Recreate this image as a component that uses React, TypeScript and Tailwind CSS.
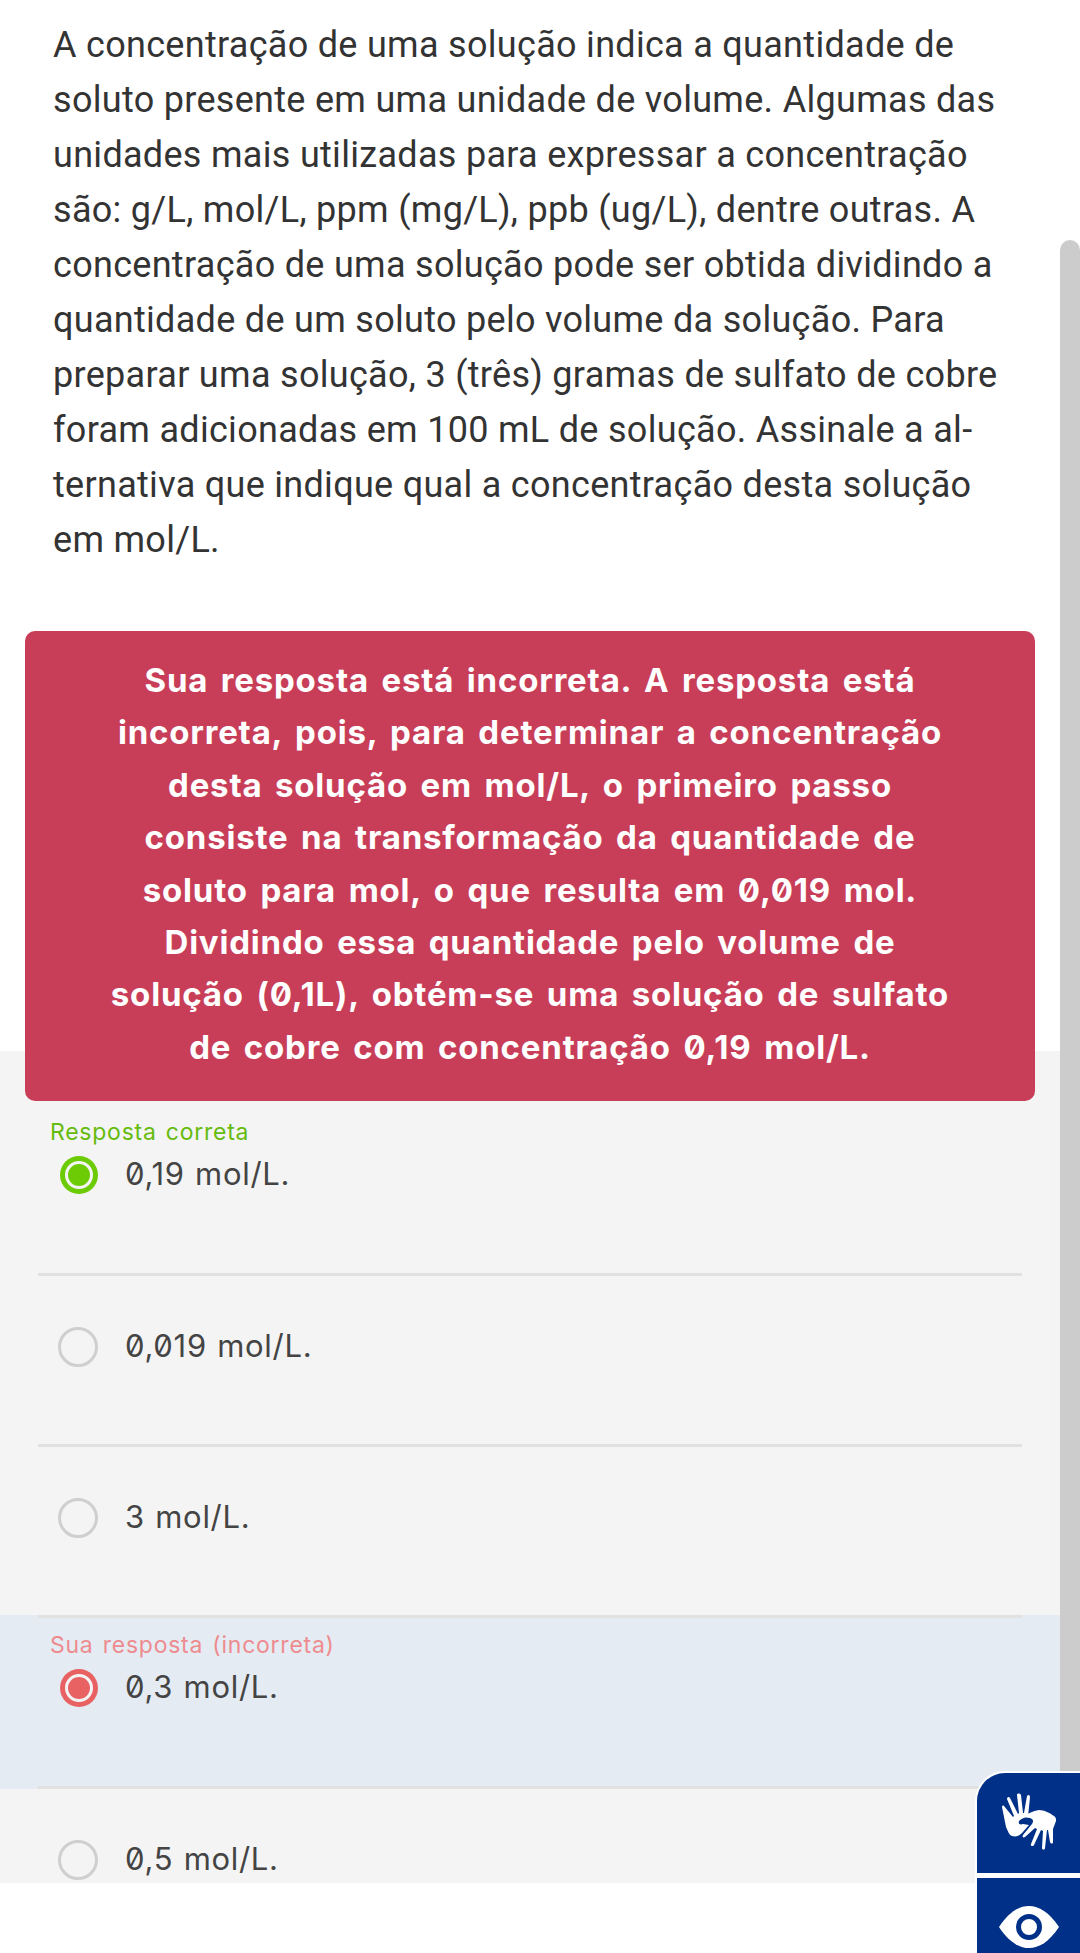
const questionLines = [
  'A concentração de uma solução indica a quantidade de',
  'soluto presente em uma unidade de volume. Algumas das',
  'unidades mais utilizadas para expressar a concentração',
  'são: g/L, mol/L, ppm (mg/L), ppb (ug/L), dentre outras. A',
  'concentração de uma solução pode ser obtida dividindo a',
  'quantidade de um soluto pelo volume da solução. Para',
  'preparar uma solução, 3 (três) gramas de sulfato de cobre',
  'foram adicionadas em 100 mL de solução. Assinale a al-',
  'ternativa que indique qual a concentração desta solução',
  'em mol/L.',
]

const feedbackLines = [
  'Sua resposta está incorreta. A resposta está',
  'incorreta, pois, para determinar a concentração',
  'desta solução em mol/L, o primeiro passo',
  'consiste na transformação da quantidade de',
  'soluto para mol, o que resulta em 0,019 mol.',
  'Dividindo essa quantidade pelo volume de',
  'solução (0,1L), obtém-se uma solução de sulfato',
  'de cobre com concentração 0,19 mol/L.',
]

type OptionState = 'correct' | 'wrong' | 'none'

const options: { text: string; state: OptionState; label?: string }[] = [
  { text: '0,19 mol/L.', state: 'correct', label: 'Resposta correta' },
  { text: '0,019 mol/L.', state: 'none' },
  { text: '3 mol/L.', state: 'none' },
  { text: '0,3 mol/L.', state: 'wrong', label: 'Sua resposta (incorreta)' },
  { text: '0,5 mol/L.', state: 'none' },
]

function Radio({ state }: { state: OptionState }) {
  if (state === 'none') {
    return <div className="h-[40px] w-[40px] shrink-0 rounded-full border-[3px] border-[#cfcfcf]" />
  }
  return (
    <div
      className={`ml-[2px] flex h-[38px] w-[38px] shrink-0 items-center justify-center rounded-full ${
        state === 'correct' ? 'bg-[#6ccb05]' : 'bg-[#e96263]'
      }`}
    >
      <div className="h-[28px] w-[28px] rounded-full border-[3px] border-[#f4f4f4]" />
    </div>
  )
}

function OptionRow({ text, state, label }: { text: string; state: OptionState; label?: string }) {
  const isWrong = state === 'wrong'
  return (
    <div className={isWrong ? '-mt-[3px] h-[174px] bg-[#e4ebf3]' : 'h-[171px]'}>
      <div className={`mx-[38px] h-full border-b-[3px] border-[#e1e1e1] pt-[11px] ${isWrong ? 'border-t-[3px]' : ''}`}>
        {label ? (
          <div
            className={`h-[30px] pl-[12px] pt-[1px] text-[23px] leading-[30px] tracking-[0.75px] [word-spacing:2px] ${
              state === 'correct' ? 'text-[#66bb0e]' : 'text-[#ee8b8f]'
            }`}
          >
            {label}
          </div>
        ) : (
          <div className="h-[30px]" />
        )}
        <div className="mt-[10px] flex items-center pl-[20px]">
          <Radio state={state} />
          <span className="ml-[27px] -translate-y-[1px] text-[31px] leading-[38px] tracking-[0.7px] text-[#444444] [font-feature-settings:'zero'] [word-spacing:1px]">
            {text}
          </span>
        </div>
      </div>
    </div>
  )
}

function SignLanguageIcon() {
  return (
    <svg viewBox="0 0 54 60" className="h-[60px] w-[54px]" fill="white">
      <path d="M0 14c0-1 1-2 2-1l9 11 1-1-7-17c0-2 2-3 3-1l8 16 1-1-2-18c0-2 3-2 4 0l2 18h1l3-17c1-2 3-1 3 1l-2 20c-3 0-7 2-9 4-1 3 1 4 4 3l6 1-7 8c-3 3-6 4-10 3-3-1-4-5-6-9z" />
      <path d="M20 24c5-3 11-6 17-7 5 0 11 3 15 6 2 1 2 3 2 5l-3 8 0 13c0 2-2 2-3 0l-2-12h-1l-2 18c0 2-3 2-3 0l1-17-2-1-7 15c-1 2-4 1-3-1l6-15-2-1-10 9c-2 1-3 0-2-2l9-11c2-3 1-5-2-6l-7-1c-1 0-2 0-1 0z" />
    </svg>
  )
}

function EyeIcon() {
  return (
    <svg viewBox="0 0 60 42" className="h-[42px] w-[60px]">
      <path d="M0 21C10 6 20 0 30 0s20 6 30 21C50 36 40 42 30 42S10 36 0 21z" fill="white" />
      <circle cx="30" cy="21" r="10.5" fill="none" stroke="#003087" strokeWidth="5" />
    </svg>
  )
}

export default function App() {
  return (
    <div className="relative h-[1953px] w-[1080px] overflow-hidden bg-white font-['Inter',sans-serif]">
      <div className="pl-[53px] pt-[18px] font-['Roboto',sans-serif] text-[36px] leading-[55px] tracking-[0.3px] text-[#333333]">
        {questionLines.map(line => (
          <div key={line} className="whitespace-nowrap">
            {line}
          </div>
        ))}
      </div>

      <div className="relative z-10 ml-[25px] mr-[45px] mt-[63px] h-[470px] rounded-[10px] bg-[#c83e58] pt-[23px] text-center text-[33px] font-bold leading-[52.4px] tracking-[0.8px] text-white [font-feature-settings:'zero'] [word-spacing:4px]">
        {feedbackLines.map(line => (
          <div key={line} className="whitespace-nowrap">
            {line}
          </div>
        ))}
      </div>

      <div className="-mt-[50px] h-[832px] overflow-hidden bg-[#f4f4f4] pr-[20px] pt-[54px]">
        {options.map(option => (
          <OptionRow key={option.text} {...option} />
        ))}
      </div>

      {/* scrollbar thumb */}
      <div className="absolute right-0 top-[240px] h-[1713px] w-[20px] rounded-t-[10px] bg-[#cccccc]" />

      {/* accessibility widgets */}
      <div className="absolute bottom-0 right-0 w-[105px] rounded-tl-[30px] border-l-[2px] border-t-[2px] border-white bg-white">
        <div className="flex h-[100px] items-center justify-center rounded-tl-[28px] bg-[#003087]">
          <SignLanguageIcon />
        </div>
        <div className="mt-[5px] flex h-[75px] items-start justify-center bg-[#003087] pt-[28px]">
          <EyeIcon />
        </div>
      </div>
    </div>
  )
}
